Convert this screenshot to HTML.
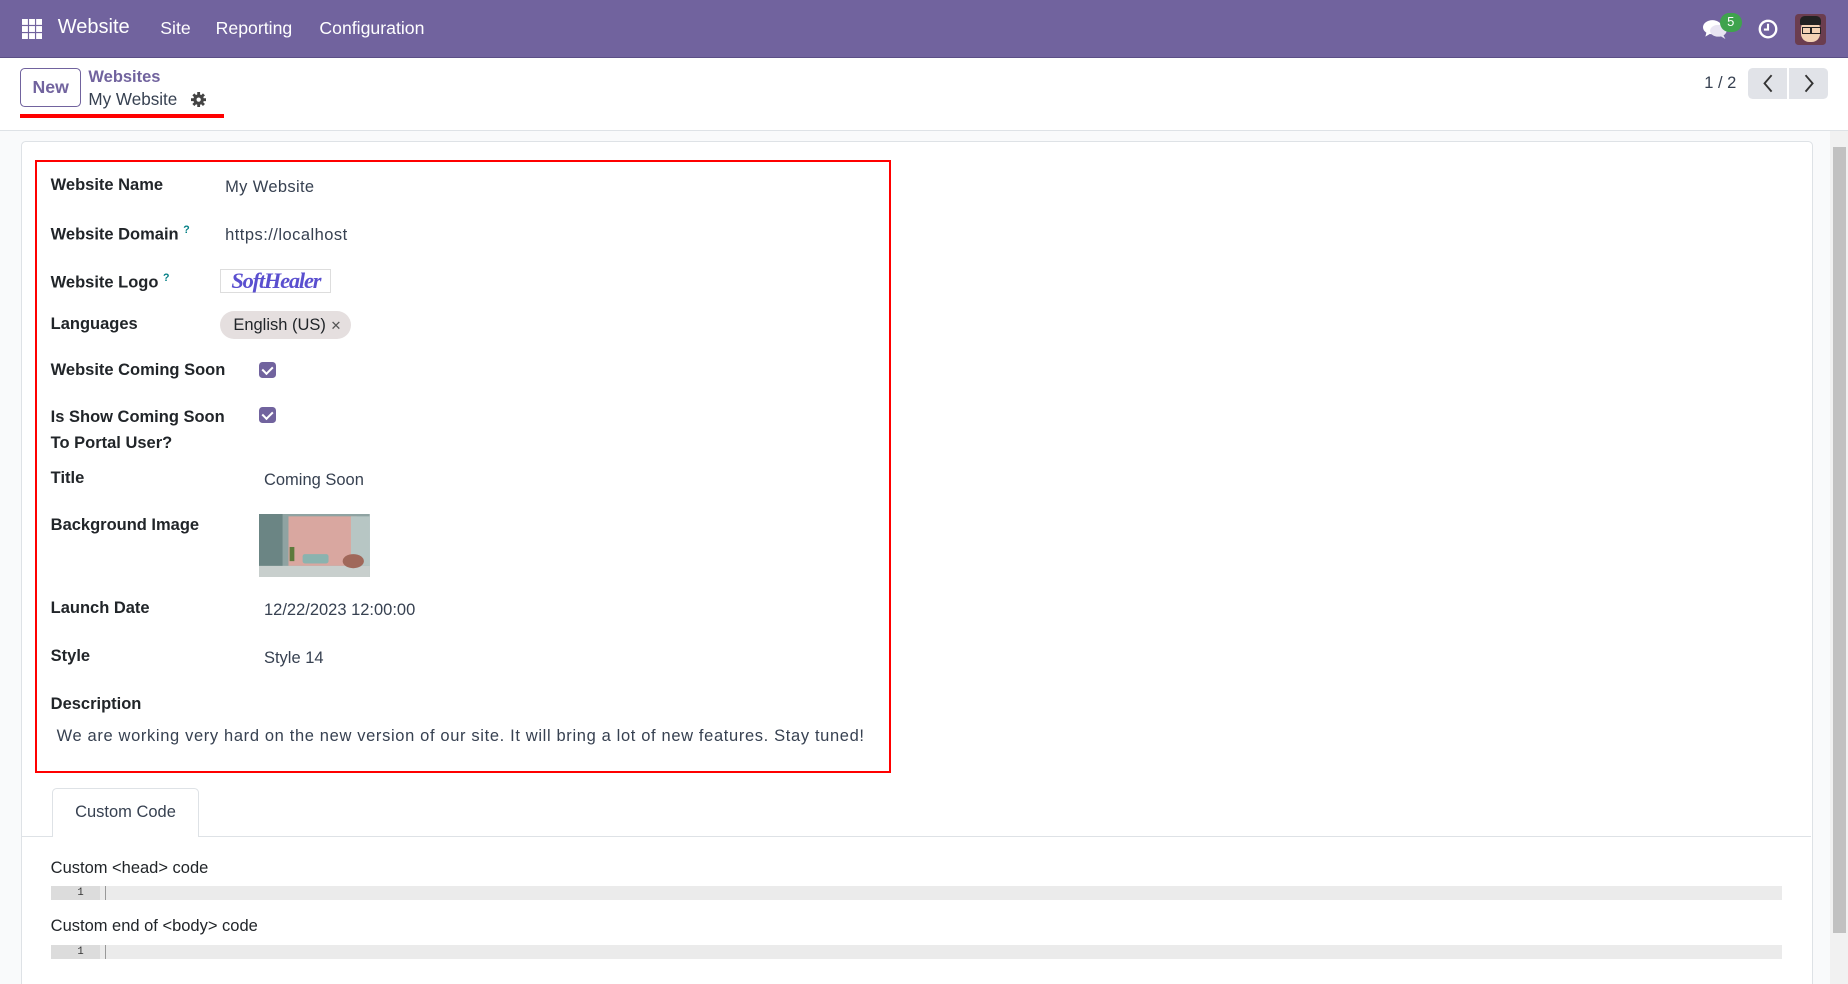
<!DOCTYPE html>
<html><head><meta charset="utf-8"><style>
html,body{margin:0;padding:0;overflow:hidden;width:1848px;height:984px;}
#z{zoom:1.178571;width:1568px;height:835px;position:relative;background:#f9fafb;font-family:"Liberation Sans",sans-serif;color:#212529;font-size:14px;overflow:hidden}
.a{position:absolute;white-space:nowrap}
.top{left:0;top:0;width:1568px;height:48px;background:#71639e;border-bottom:1px solid #5b4f86}
.top .a{color:#fff;font-size:15px;top:15px}
.cp{left:0;top:49px;width:1568px;height:61px;background:#fff;border-bottom:1px solid #dee2e6}
.card{left:18px;top:120px;width:1519px;height:730px;background:#fff;border:1px solid #dee2e6;border-radius:4px}
.lbl{font-weight:bold;color:#212529;font-size:14px}
.val{color:#374151;font-size:14px}
.cb{width:14px;height:14px;background:#71639e;border-radius:3px}
.cb:after{content:"";position:absolute;left:4px;top:2px;width:4px;height:7px;border:solid #fff;border-width:0 2px 2px 0;transform:rotate(45deg)}
.code{left:43px;width:1469px;height:12px;background:#ebebeb}
.code .g{position:absolute;left:0;top:0;width:42px;height:12px;background:#dcdcdc;font-family:"Liberation Mono",monospace;font-size:9px;color:#333;text-align:right;line-height:12px}
.code .g span{margin-right:14px}
.code .c{position:absolute;left:46px;top:0;width:1px;height:12px;background:#999}
</style></head><body><div id="z">
<div class="a top">
  <svg class="a" style="left:19px;top:16px" width="17" height="17" viewBox="0 0 17 17" fill="#fff"><rect x="0" y="0" width="5" height="5"/><rect x="6" y="0" width="5" height="5"/><rect x="12" y="0" width="5" height="5"/><rect x="0" y="6" width="5" height="5"/><rect x="6" y="6" width="5" height="5"/><rect x="12" y="6" width="5" height="5"/><rect x="0" y="12" width="5" height="5"/><rect x="6" y="12" width="5" height="5"/><rect x="12" y="12" width="5" height="5"/></svg>
  <div class="a" style="left:49px;top:14px;font-size:17px">Website</div>
  <div class="a" style="left:136px">Site</div>
  <div class="a" style="left:183px">Reporting</div>
  <div class="a" style="left:271px">Configuration</div>
  <svg class="a" style="left:1445px;top:16px" width="22" height="18" viewBox="0 0 22 18" fill="#fff"><ellipse cx="8" cy="7" rx="8" ry="6"/><path d="M3 11 L2 15 L7 12Z"/><ellipse cx="13" cy="10" rx="7" ry="5" fill="#e8e4f2"/><path d="M17 13 L19 17 L14 14Z" fill="#e8e4f2"/></svg>
  <div class="a" style="left:1459px;top:11px;width:19px;height:16px;background:#3fa34d;border-radius:8px;color:#fff;font-size:11px;text-align:center;line-height:16px">5</div>
  <svg class="a" style="left:1492px;top:16px" width="17" height="17" viewBox="0 0 17 17"><circle cx="8.5" cy="8.5" r="7" fill="none" stroke="#fff" stroke-width="2"/><path d="M8.5 4 V9 H5" fill="none" stroke="#fff" stroke-width="1.8"/></svg>
  <div class="a" style="left:1523px;top:12px;width:26px;height:26px;border-radius:3px;background:#6b3d4f;overflow:hidden">
    <div class="a" style="left:5px;top:5px;width:16px;height:19px;background:#f3d2b4;border-radius:7px"></div>
    <div class="a" style="left:4px;top:2px;width:18px;height:7px;background:#222;border-radius:4px 4px 1px 1px"></div>
    <div class="a" style="left:6px;top:11px;width:6px;height:4px;border:1px solid #222"></div>
    <div class="a" style="left:14px;top:11px;width:6px;height:4px;border:1px solid #222"></div>
  </div>
</div>
<div class="a cp">
  <div class="a" style="left:17px;top:9px;width:52px;height:33px;border:1px solid #71639e;border-radius:4px;box-sizing:border-box;color:#71639e;font-size:15px;font-weight:bold;text-align:center;line-height:31px">New</div>
  <div class="a" style="left:75px;top:9px;color:#71639e;font-size:14px;font-weight:bold">Websites</div>
  <div class="a" style="left:75px;top:27px;color:#374151;font-size:14.5px">My Website</div>
  <svg class="a" style="left:162px;top:29px" width="13" height="13" viewBox="0 0 13 13"><circle cx="6.5" cy="6.5" r="4.5" fill="#444"/><g stroke="#444" stroke-width="2.4"><path d="M6.5 0V13M0 6.5H13M2 2L11 11M11 2L2 11"/></g><circle cx="6.5" cy="6.5" r="1.8" fill="#fff"/></svg>
  <div class="a" style="left:17px;top:48px;width:173px;height:3px;background:#f00"></div>
  <div class="a" style="left:1446px;top:14px;font-size:14px;color:#374151">1 / 2</div>
  <div class="a" style="left:1483px;top:9px;width:33px;height:26px;background:#e1e3e8;border-radius:4px 0 0 4px"></div>
  <div class="a" style="left:1518px;top:9px;width:33px;height:26px;background:#e1e3e8;border-radius:0 4px 4px 0"></div>
  <svg class="a" style="left:1494px;top:14px" width="12" height="16" viewBox="0 0 12 16"><path d="M9 1L3 8L9 15" fill="none" stroke="#333" stroke-width="1.6"/></svg>
  <svg class="a" style="left:1529px;top:14px" width="12" height="16" viewBox="0 0 12 16"><path d="M3 1L9 8L3 15" fill="none" stroke="#333" stroke-width="1.6"/></svg>
</div>
<div class="a card"></div>
<div class="a" style="left:1553px;top:111px;width:15px;height:724px;background:#f1f1f1"></div>
<div class="a" style="left:1555px;top:125px;width:11px;height:667px;background:#c1c1c1"></div>
<div class="a" style="left:30px;top:136px;width:726px;height:520px;border:2px solid #f00;box-sizing:border-box"></div>
<div class="a lbl" style="left:43px;top:149px">Website Name</div><div class="a val" style="left:191px;top:151px;letter-spacing:0.3px">My Website</div>
<div class="a lbl" style="left:43px;top:190px">Website Domain <sup style="color:#017e84;font-size:9px">?</sup></div><div class="a val" style="left:191px;top:192px;letter-spacing:0.4px">https://localhost</div>
<div class="a lbl" style="left:43px;top:231px">Website Logo <sup style="color:#017e84;font-size:9px">?</sup></div>
<div class="a" style="left:187px;top:228px;width:94px;height:21px;border:1px solid #ddd;box-sizing:border-box;color:#5a4fcf;font-family:'Liberation Serif',serif;font-weight:bold;font-style:italic;font-size:19px;line-height:19px;letter-spacing:-1px;text-align:center">SoftHealer</div>
<div class="a lbl" style="left:43px;top:267px">Languages</div>
<div class="a" style="left:187px;top:264px;width:111px;height:24px;background:#e5dfdf;border-radius:12px;color:#212529;font-size:14px;line-height:24px;box-sizing:border-box;padding-left:11px">English (US) <span style="font-size:11px;color:#555">✕</span></div>
<div class="a lbl" style="left:43px;top:306px">Website Coming Soon</div><div class="a cb" style="left:220px;top:307px"></div>
<div class="a lbl" style="left:43px;top:344px;line-height:22px">Is Show Coming Soon<br>To Portal User?</div><div class="a cb" style="left:220px;top:345px"></div>
<div class="a lbl" style="left:43px;top:398px">Title</div><div class="a val" style="left:224px;top:400px">Coming Soon</div>
<div class="a lbl" style="left:43px;top:438px">Background Image</div>
<svg class="a" style="left:220px;top:436px" width="94" height="54" viewBox="0 0 94 54"><rect width="94" height="54" fill="#8fa3a2"/><rect x="25" y="2" width="58" height="42" fill="#d9a7a0"/><rect x="0" y="0" width="20" height="54" fill="#6b8584"/><rect x="78" y="2" width="16" height="42" fill="#b7c6c4"/><rect x="0" y="44" width="94" height="10" fill="#c8cfcd"/><rect x="37" y="34" width="22" height="8" rx="2" fill="#8ab3af"/><ellipse cx="80" cy="40" rx="9" ry="6" fill="#a0685a"/><rect x="26" y="28" width="4" height="12" fill="#5d7a3c"/></svg>
<div class="a lbl" style="left:43px;top:508px">Launch Date</div><div class="a val" style="left:224px;top:510px">12/22/2023 12:00:00</div>
<div class="a lbl" style="left:43px;top:549px">Style</div><div class="a val" style="left:224px;top:551px">Style 14</div>
<div class="a lbl" style="left:43px;top:590px">Description</div>
<div class="a val" style="left:48px;top:617px;letter-spacing:0.55px">We are working very hard on the new version of our site. It will bring a lot of new features. Stay tuned!</div>
<div class="a" style="left:19px;top:709px;width:1518px;height:1px;background:#dee2e6"></div>
<div class="a" style="left:44px;top:669px;width:125px;height:41px;background:#fff;border:1px solid #dee2e6;border-bottom:none;border-radius:4px 4px 0 0;box-sizing:border-box;text-align:center;line-height:40px;color:#374151">Custom Code</div>
<div class="a" style="left:19px;top:710px;width:1518px;height:125px;background:#fff"></div>
<div class="a lbl" style="left:43px;top:729px;font-weight:normal;color:#212529">Custom &lt;head&gt; code</div>
<div class="a code" style="top:752px"><div class="g"><span>1</span></div><div class="c"></div></div>
<div class="a lbl" style="left:43px;top:778px;font-weight:normal;color:#212529">Custom end of &lt;body&gt; code</div>
<div class="a code" style="top:802px"><div class="g"><span>1</span></div><div class="c"></div></div>
</div></body></html>
